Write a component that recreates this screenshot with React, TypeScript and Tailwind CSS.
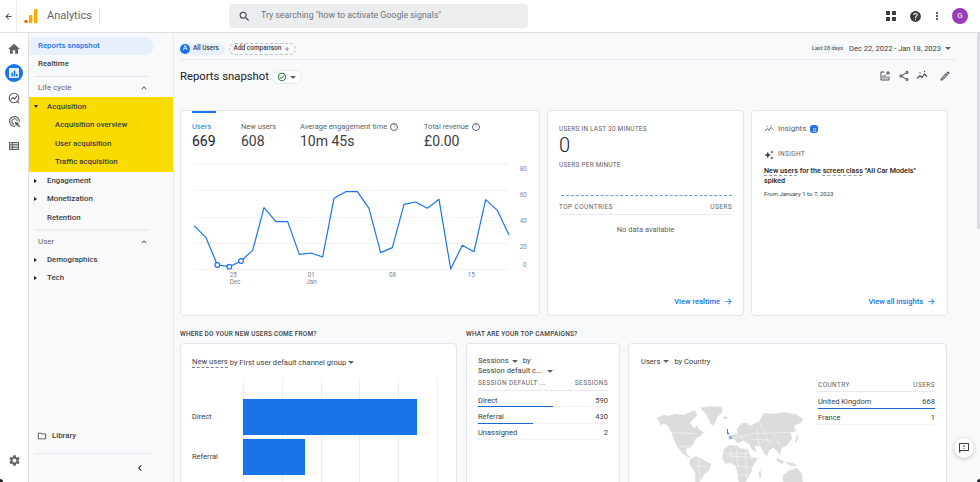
import type { ReactNode } from "react";
import {
  MdArrowBack,
  MdArrowForward,
  MdAutoAwesome,
  MdCheckCircleOutline,
  MdChevronLeft,
  MdExpandLess,
  MdHelp,
  MdHome,
  MdMoreVert,
  MdOutlineAddchart,
  MdOutlineAdsClick,
  MdOutlineEdit,
  MdOutlineFeedback,
  MdOutlineFolder,
  MdOutlineShare,
  MdSearch,
  MdSettings,
  MdBarChart,
  MdAdd,
} from "react-icons/md";

const chartPoints =
  "42,362 78,398 112,480 148,485 183,468 218,436 252,308 288,350 323,350 358,448 393,444 428,456 462,280 497,260 532,260 567,310 602,443 637,428 672,298 707,291 742,310 777,283 812,492 847,421 882,440 917,284 952,316 987,390";

const Caret = ({ open = false }: { open?: boolean }) => (
  <span
    className={
      open
        ? "h-0 w-0 border-x-[2.5px] border-t-[3px] border-x-transparent border-t-[#202124]"
        : "h-0 w-0 border-y-[2.5px] border-l-[3px] border-y-transparent border-l-[#202124]"
    }
  />
);

const Down = () => (
  <span className="inline-block h-0 w-0 border-x-[3px] border-t-[3px] border-x-transparent border-t-[#5f6368]" />
);

const TrendIcon = ({ className }: { className?: string }) => (
  <svg viewBox="0 0 24 24" className={className} fill="none" stroke="currentColor" strokeWidth="2.4">
    <path d="M2 17l6-6 4 4 5-7 5 5" />
    <circle cx="8" cy="6" r="1.4" fill="currentColor" stroke="none" />
    <circle cx="17" cy="3" r="1.4" fill="currentColor" stroke="none" />
  </svg>
);

const NavRow = ({ label, arrow, open, indent = false }: { label: string; arrow?: boolean; open?: boolean; indent?: boolean }) => (
  <div className={`flex h-[18.4px] items-center ${indent ? "pl-[26px]" : "pl-[5px]"}`}>
    {!indent && <span className="flex w-[13px]">{arrow && <Caret open={open} />}</span>}
    <span className="text-[7.8px] font-medium text-[#3c4043]">{label}</span>
  </div>
);

const SectionHead = ({ label }: { label: string }) => (
  <div className="flex h-[20px] items-center justify-between pt-[2px] pr-[24px] pl-[9px]">
    <span className="text-[8px] text-[#5f6368]">{label}</span>
    <MdExpandLess className="text-[10px] text-[#5f6368]" />
  </div>
);

const Metric = ({ label, value, width, active, help }: { label: string; value: string; width: string; active?: boolean; help?: boolean }) => (
  <div className={width}>
    <div className={`flex h-[10px] items-center gap-[3px] text-[7.5px] ${active ? "text-[#1a73e8]" : "text-[#5f6368]"}`}>
      {label}
      {help && (
        <span className="flex h-[8px] w-[8px] items-center justify-center rounded-full border border-[#5f6368] text-[5px]">?</span>
      )}
    </div>
    <div className={`text-[14px] leading-[18px] ${active ? "text-[#202124]" : "text-[#3c4043]"}`}>{value}</div>
  </div>
);

const Card = ({ className, children }: { className: string; children: ReactNode }) => (
  <div className={`rounded-[4px] border border-[#e3e5e8] bg-white ${className}`}>{children}</div>
);

const ViewLink = ({ label }: { label: string }) => (
  <div className="mt-auto mr-[-1px] flex items-center justify-end gap-[4px] text-[7.5px] font-medium text-[#1a73e8]">
    {label}
    <MdArrowForward className="text-[9px]" />
  </div>
);

const TableHead = ({ left, right }: { left: string; right: string }) => (
  <div className="flex h-[15px] items-center justify-between border-b border-[#e8eaed] pt-[2px] text-[6.5px] tracking-[0.4px] text-[#5f6368]">
    <span>{left}</span>
    <span>{right}</span>
  </div>
);

const TableRow = ({ label, value, bar }: { label: string; value: string; bar: string }) => (
  <div className="h-[16.4px] border-b border-[#f1f3f4]">
    <div className="flex h-[15.4px] items-center justify-between pt-[3px] text-[7.5px] text-[#3c4043]">
      <span>{label}</span>
      <span>{value}</span>
    </div>
    <div className={`h-[1px] ${bar}`} />
  </div>
);

const WorldMap = () => (
  <svg viewBox="0 0 570 261" className="h-[87px] w-[190px]">
    <g fill="#dcdcdc">
      <path d="M52 68 L70 60 L85 62 L105 56 L130 60 L150 52 L165 46 L172 60 L160 72 L150 84 L162 100 L172 92 L178 104 L192 112 L180 124 L168 130 L160 146 L150 158 L138 162 L140 176 L152 186 L146 188 L128 176 L112 156 L100 130 L94 112 L84 92 L70 86 L62 92 Z" />
      <path d="M180 38 L205 34 L245 36 L248 50 L232 66 L222 92 L212 88 L204 68 L196 54 Z" />
      <path d="M248 66 L262 64 L262 72 L250 72 Z" />
      <path d="M150 192 L168 184 L186 192 L214 208 L208 226 L194 236 L184 252 L178 261 L166 261 L166 236 L160 222 L148 208 Z" />
      <path d="M252 162 L268 150 L292 152 L300 160 L322 162 L334 186 L354 190 L338 214 L334 232 L322 250 L318 261 L296 261 L292 232 L286 212 L272 204 L256 206 L246 188 Z" />
      <path d="M268 130 L280 116 L292 118 L290 102 L306 84 L322 84 L330 92 L358 78 L372 54 L400 56 L430 52 L468 58 L490 72 L482 84 L462 92 L468 108 L452 114 L456 132 L440 152 L426 158 L420 180 L412 170 L400 158 L388 166 L380 186 L368 168 L360 152 L344 152 L350 172 L336 164 L328 146 L308 138 L294 144 L284 134 Z" />
      <path d="M436 236 L446 226 L462 222 L470 218 L486 236 L488 261 L430 261 L428 242 Z" />
      <path d="M412 188 L432 200 L428 206 L408 196 Z" />
      <path d="M436 200 L458 204 L476 212 L450 212 Z" />
      <path d="M470 120 L476 124 L470 140 L464 142 Z" />
      <path d="M356 232 L362 226 L364 246 L358 250 Z" />
    </g>
    <g fill="none" stroke="#ffffff" strokeWidth="1.4">
      <path d="M94 113 L172 116 M118 152 L150 158 M296 118 L322 150 M330 116 L458 112 M360 84 L390 150 M400 118 L420 150 M330 132 L400 136 M350 100 L358 150 M280 128 L330 120" />
      <path d="M262 182 L340 188 M290 156 L294 228 M316 164 L320 250 M294 214 L340 216 M252 176 L330 176 M274 160 L276 204 M160 212 L205 216 M176 190 L180 255 M296 240 L330 240" />
    </g>
    <path d="M261 102 L265 104 L263 110 L268 118 L262 118 Z" fill="#174ea6" />
    <path d="M266 122 L275 122 L276 133 L267 133 Z" fill="#8ab4f8" />
  </svg>
);

export default function App() {
  return (
    <div className="relative flex h-[482px] w-[980px] flex-col overflow-hidden bg-white font-[Roboto,sans-serif] text-[#202124]">
      {/* top bar */}
      <header className="flex h-[33px] shrink-0 items-center border-b border-[#e0e0e0] bg-white">
        <div className="flex h-full w-[17px] items-center justify-center border-r border-[#eeeeee]">
          <MdArrowBack className="text-[9px]" />
        </div>
        <svg viewBox="0 0 14 16" className="ml-[7px] h-[16px] w-[14px]">
          <circle cx="2" cy="13.5" r="1.8" fill="#e8710a" />
          <rect x="5" y="7" width="3.4" height="8.3" rx="1" fill="#f9ab00" />
          <rect x="10" y="1" width="3.4" height="14.3" rx="1.2" fill="#f9ab00" />
        </svg>
        <span className="ml-[9px] w-[44px] text-[11px] text-[#5f6368]">Analytics</span>
        <div className="ml-[8px] h-[16px] w-px bg-[#e0e0e0]" />
        <div className="ml-[129px] flex h-[24px] w-[299px] items-center rounded-[4px] bg-[#ebedef] pl-[9px]">
          <MdSearch className="text-[13px] text-[#3c4043]" />
          <span className="ml-[10px] text-[8.8px] text-[#70757a]">Try searching "how to activate Google signals"</span>
        </div>
        <div className="ml-auto flex items-center pr-[12px]">
          <svg viewBox="0 0 10 10" className="h-[10px] w-[10px] text-[#3c4043]" fill="currentColor">
            <rect width="4" height="4" />
            <rect x="6" width="4" height="4" />
            <rect y="6" width="4" height="4" />
            <rect x="6" y="6" width="4" height="4" />
          </svg>
          <MdHelp className="ml-[13px] text-[13px] text-[#3c4043]" />
          <MdMoreVert className="ml-[9px] text-[12px] text-[#3c4043]" />
          <div className="ml-[9px] flex h-[16px] w-[16px] items-center justify-center rounded-full bg-[#9c3bb8] text-[8px] text-white">G</div>
        </div>
      </header>

      <div className="flex min-h-0 flex-1">
        {/* icon rail */}
        <aside className="flex w-[29px] shrink-0 flex-col items-center border-r border-[#e0e0e0] bg-white pt-[9px] text-[#5f6368]">
          <MdHome className="text-[14px]" />
          <div className="mt-[8px] flex h-[18px] w-[18px] items-center justify-center rounded-full bg-[#1a73e8]">
            <div className="flex h-[10px] w-[10px] items-center justify-center rounded-[1px] bg-[#e8f0fe]">
              <MdBarChart className="text-[9px] text-[#1a73e8]" />
            </div>
          </div>
          <svg viewBox="0 0 24 24" className="mt-[10px] h-[12px] w-[12px]" fill="none" stroke="currentColor" strokeWidth="2.4">
            <circle cx="12" cy="12" r="9.5" />
            <path d="M6 15l4-4 3 3 5-6" />
            <path d="M18 18l4 4" />
          </svg>
          <MdOutlineAdsClick className="mt-[11px] text-[13px]" />
          <svg viewBox="0 0 10 8" className="mt-[14px] h-[8px] w-[10px]" fill="#dadce0" stroke="#5f6368" strokeWidth="1">
            <rect x="0.5" y="0.5" width="9" height="7" />
            <path d="M3.5 0.5v7M0.5 2.8h9M0.5 5.2h9" />
          </svg>
          <MdSettings className="mt-auto mb-[15px] text-[13px]" />
        </aside>

        {/* report nav */}
        <nav className="flex w-[145px] shrink-0 flex-col border-r border-[#e8eaed] bg-[#f8f9fa] pt-[4px]">
          <div className="mr-[19px] flex h-[18px] items-center rounded-r-full bg-[#e8f0fe] pl-[9px] text-[7.8px] font-medium text-[#1a73e8]">
            Reports snapshot
          </div>
          <div className="flex h-[18px] items-center pl-[9px] text-[7.8px] font-medium text-[#3c4043]">Realtime</div>
          <div className="mt-[3px] mr-[25px] ml-[5px] border-t border-[#e3e5e8]" />
          <SectionHead label="Life cycle" />
          <div className="bg-[#f9db00] py-[0.5px]">
            <NavRow label="Acquisition" arrow open />
            <NavRow label="Acquisition overview" indent />
            <NavRow label="User acquisition" indent />
            <NavRow label="Traffic acquisition" indent />
          </div>
          <NavRow label="Engagement" arrow />
          <NavRow label="Monetization" arrow />
          <NavRow label="Retention" />
          <div className="mt-[2px] mr-[25px] ml-[5px] border-t-2 border-[#eeeff1]" />
          <SectionHead label="User" />
          <NavRow label="Demographics" arrow />
          <NavRow label="Tech" arrow />
          <div className="mt-auto flex items-center pl-[8px] text-[7.8px] font-medium text-[#3c4043]">
            <MdOutlineFolder className="text-[10px] text-[#3c4043]" />
            <span className="ml-[5px]">Library</span>
          </div>
          <div className="mt-[11px] mr-[21px] ml-[6px] border-t border-[#e8eaed]" />
          <div className="flex h-[28px] items-center justify-end pr-[27px]">
            <MdChevronLeft className="text-[12px] text-[#202124]" />
          </div>
        </nav>

        {/* main */}
        <main className="relative min-w-0 flex-1 bg-[#f8f9fa] pl-[6px]">
          <div className="mr-[24px] flex h-[27px] items-center justify-between border-b border-[#e8eaed] pt-[5px]">
            <div className="flex items-center gap-[4px]">
              <div className="flex h-[12px] w-[45px] items-center gap-[3px] rounded-full bg-[#e8f0fe]">
                <span className="flex h-[10px] w-[10px] items-center justify-center rounded-full bg-[#1a73e8] text-[7px] text-white">A</span>
                <span className="text-[6.5px] font-medium text-[#3c4043]">All Users</span>
              </div>
              <div className="flex h-[12px] w-[67px] items-center justify-center gap-[2px] rounded-full border border-dashed border-[#bdc1c6] text-[6.5px] font-medium text-[#3c4043]">
                Add comparison
                <MdAdd className="text-[8px] text-[#5f6368]" />
              </div>
            </div>
            <div className="flex items-center pr-[5px]">
              <span className="rounded-[2px] bg-[#f1f3f4] px-[1px] text-[5.5px] font-medium text-[#5f6368]">Last 28 days</span>
              <span className="ml-[5px] text-[7.5px] text-[#3c4043]">Dec 22, 2022 - Jan 18, 2023</span>
              <span className="ml-[4px] flex"><Down /></span>
            </div>
          </div>

          <div className="mr-[24px] flex h-[50px] items-start justify-between pt-[9px]">
            <div className="flex items-center">
              <h1 className="text-[11.3px] font-normal text-[#202124]">Reports snapshot</h1>
              <div className="ml-[3px] flex h-[14px] w-[30px] items-center justify-center gap-[3px] rounded-full border border-[#e8eaed] bg-white">
                <MdCheckCircleOutline className="text-[10px] text-[#188038]" />
                <Down />
              </div>
            </div>
            <div className="flex items-center pt-[1px] pr-[5px] text-[#4a4e52]">
              <MdOutlineAddchart className="text-[12px]" />
              <MdOutlineShare className="ml-[7px] text-[12px]" />
              <TrendIcon className="ml-[6px] h-[12px] w-[12px]" />
              <MdOutlineEdit className="ml-[11px] text-[12px]" />
            </div>
          </div>

          <div className="flex h-[206px] gap-[7px] pr-[32px]">
            <Card className="relative w-[360px] shrink-0 overflow-hidden">
              <div className="absolute top-0 left-[11px] h-[1.5px] w-[24px] bg-[#1a73e8]" />
              <div className="flex pt-[11px] pl-[11px]">
                <Metric label="Users" value="669" width="w-[49px]" active />
                <Metric label="New users" value="608" width="w-[59px]" />
                <Metric label="Average engagement time" value="10m 45s" width="w-[124px]" help />
                <Metric label="Total revenue" value="£0.00" width="w-[100px]" help />
              </div>
              <svg viewBox="0 0 1080 645" className="absolute top-[-6px] left-[-1px] h-[215px] w-[360px]">
                <g stroke="#f1f1f1" strokeWidth="3">
                  <path d="M42 178H985M42 256H985M42 337H985M42 415H985M42 493H985" />
                </g>
                <polyline points={chartPoints} fill="none" stroke="#1a73e8" strokeWidth="3.6" strokeLinejoin="round" />
                <g fill="#fff" stroke="#1a73e8" strokeWidth="3.6">
                  <circle cx="112" cy="480" r="7" />
                  <circle cx="148" cy="485" r="7" />
                  <circle cx="183" cy="468" r="7" />
                </g>
                <g fill="#80868b" fontSize="19" fontFamily="Roboto, sans-serif">
                  <text x="1019" y="197">80</text>
                  <text x="1019" y="275">60</text>
                  <text x="1019" y="354">40</text>
                  <text x="1019" y="432">20</text>
                  <text x="1029" y="486">0</text>
                  <text x="149" y="516">25</text>
                  <text x="149" y="536">Dec</text>
                  <text x="383" y="516">01</text>
                  <text x="379" y="536">Jan</text>
                  <text x="627" y="516">08</text>
                  <text x="863" y="516">15</text>
                </g>
              </svg>
            </Card>

            <Card className="flex w-[197px] shrink-0 flex-col px-[11px] pt-[14px] pb-[8px]">
              <div className="text-[6.5px] tracking-[0.2px] text-[#5f6368]">USERS IN LAST 30 MINUTES</div>
              <div className="text-[20px] leading-[20px] font-light text-[#202124]">0</div>
              <div className="mt-[6px] text-[6.5px] tracking-[0.2px] text-[#5f6368]">USERS PER MINUTE</div>
              <div className="mt-[24px] ml-[2px] border-t border-dashed border-[#669df6]" />
              <div className="mt-[7px] flex h-[12px] items-center justify-between border-b border-[#e8eaed] pb-[1px] text-[6.5px] tracking-[0.4px] text-[#5f6368]">
                <span>TOP COUNTRIES</span>
                <span>USERS</span>
              </div>
              <div className="mt-[9px] text-center text-[7.5px] text-[#5f6368]">No data available</div>
              <ViewLink label="View realtime" />
            </Card>

            <Card className="flex w-[197px] shrink-0 flex-col px-[12px] pt-[12px] pb-[8px]">
              <div className="flex items-center text-[8px] text-[#5f6368]">
                <TrendIcon className="h-[10px] w-[10px]" />
                <span className="ml-[4px]">Insights</span>
                <span className="ml-[4px] flex h-[8px] w-[8px] items-center justify-center rounded-[3px] bg-[#1a73e8] text-[6px] text-white">0</span>
              </div>
              <div className="mt-[15px] flex items-center text-[6.5px] tracking-[0.3px] text-[#5f6368]">
                <MdAutoAwesome className="text-[10px] text-[#3c4043]" />
                <span className="ml-[4px]">INSIGHT</span>
              </div>
              <div className="mt-[6px] text-[7.2px] leading-[9.5px] font-medium text-[#202124]">
                <div>
                  <span className="underline decoration-[#9aa0a6] decoration-dashed underline-offset-2">New users</span> for the{" "}
                  <span className="underline decoration-[#9aa0a6] decoration-dashed underline-offset-2">screen class</span> "All Car Models"
                </div>
                <div>spiked</div>
              </div>
              <div className="mt-[4px] text-[6px] text-[#3c4043]">From January 1 to 7, 2023</div>
              <ViewLink label="View all insights" />
            </Card>
          </div>

          <div className="mt-[14px] flex pr-[32px]">
            <section className="mr-[9px] w-[277px] shrink-0">
              <h2 className="h-[13px] text-[6.5px] font-medium tracking-[0.2px] text-[#3c4043]">WHERE DO YOUR NEW USERS COME FROM?</h2>
              <Card className="h-[200px] px-[11px] pt-[12px]">
                <div className="flex items-center gap-[2px] text-[7.6px] text-[#3c4043]">
                  <span className="border-b border-dashed border-[#80868b]">New users</span>
                  <span>by First user default channel group</span>
                  <Down />
                </div>
                <div className="mt-[11px] ml-[51px] h-[200px] bg-[repeating-linear-gradient(90deg,#eeeeee_0,#eeeeee_1px,transparent_1px,transparent_38.8px)] pt-[20px]">
                  <div className="relative h-[36px] w-[174px] bg-[#1a73e8]">
                    <span className="absolute top-[12px] left-[-51px] text-[7.5px] text-[#3c4043]">Direct</span>
                  </div>
                  <div className="relative mt-[4px] h-[36px] w-[62px] bg-[#1a73e8]">
                    <span className="absolute top-[12px] left-[-51px] text-[7.5px] text-[#3c4043]">Referral</span>
                  </div>
                </div>
              </Card>
            </section>

            <section className="mr-[8px] w-[154px] shrink-0">
              <h2 className="h-[13px] text-[6.5px] font-medium tracking-[0.2px] text-[#3c4043]">WHAT ARE YOUR TOP CAMPAIGNS?</h2>
              <Card className="h-[200px] px-[11px] pt-[12px]">
                <div className="text-[7.6px] leading-[10px] text-[#3c4043]">
                  <div className="flex items-center gap-[3px]">
                    Sessions <Down /> <span className="ml-[2px]">by</span>
                  </div>
                  <div className="flex items-center gap-[5px]">
                    Session default c... <Down />
                  </div>
                </div>
                <TableHead left="SESSION DEFAULT ..." right="SESSIONS" />
                <TableRow label="Direct" value="590" bar="w-[75px] bg-[#1967d2]" />
                <TableRow label="Referral" value="430" bar="w-[55px] bg-[#1967d2]" />
                <TableRow label="Unassigned" value="2" bar="w-[1px] bg-[#c6d8f5]" />
              </Card>
            </section>

            <section className="w-[319px] shrink-0 pt-[13px]">
              <Card className="relative h-[200px] pt-[12px] pr-[11px] pl-[12px]">
                <div className="flex items-center gap-[3px] text-[7.6px] text-[#3c4043]">
                  Users <Down /> <span className="ml-[2px]">by Country</span>
                </div>
                <div className="mt-[10px] ml-auto w-[117px]">
                  <TableHead left="COUNTRY" right="USERS" />
                  <TableRow label="United Kingdom" value="668" bar="w-full bg-[#1967d2]" />
                  <TableRow label="France" value="1" bar="w-[1px] bg-[#c6d8f5]" />
                </div>
                <div className="absolute top-[51px] left-[11px]">
                  <WorldMap />
                </div>
              </Card>
            </section>
          </div>

          <div className="absolute top-0 right-0 h-[196px] w-[3px] bg-[#dadce0]" />
          <div className="absolute top-[405px] right-[6px] flex h-[20px] w-[20px] items-center justify-center rounded-full bg-white shadow-[0_1px_4px_rgba(60,64,67,0.3)]">
            <MdOutlineFeedback className="text-[12px] text-[#3c4043]" />
          </div>
        </main>
      </div>
      <div className="absolute bottom-0 left-0 h-[3px] w-[3px] rounded-tr-full bg-[#202124]" />
      <div className="absolute right-0 bottom-0 h-[3px] w-[3px] rounded-tl-full bg-[#202124]" />
    </div>
  );
}
